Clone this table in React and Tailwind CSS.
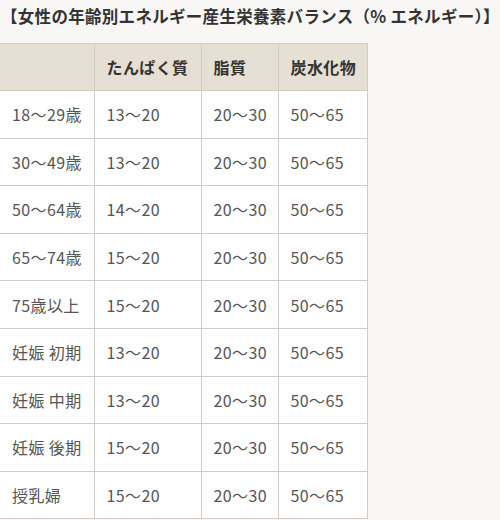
export default function App() {
  const rows = [
    ["18～29歳", "13～20", "20～30", "50～65"],
    ["30～49歳", "13～20", "20～30", "50～65"],
    ["50～64歳", "14～20", "20～30", "50～65"],
    ["65～74歳", "15～20", "20～30", "50～65"],
    ["75歳以上", "15～20", "20～30", "50～65"],
    ["妊娠 初期", "13～20", "20～30", "50～65"],
    ["妊娠 中期", "13～20", "20～30", "50～65"],
    ["妊娠 後期", "15～20", "20～30", "50～65"],
    ["授乳婦", "15～20", "20～30", "50～65"],
  ];

  return (
    <div className="min-h-[520px] w-[500px] overflow-hidden bg-[#f8f7f5] font-['Noto_Sans_CJK_JP',sans-serif]">
      <h3 className="h-[43px] pl-[1px] pt-[3px] text-[16.5px] leading-[26px] font-bold tracking-[0.3px] whitespace-nowrap text-[#333]">
        【女性の年齢別エネルギー産生栄養素バランス（% エネルギー）】
      </h3>
      <table className="w-[367px] table-fixed border-collapse text-[16px] tracking-[0.4px] text-[#555]">
        <colgroup>
          <col className="w-[94px]" />
          <col className="w-[107px]" />
          <col className="w-[77px]" />
          <col className="w-[89px]" />
        </colgroup>
        <thead>
          <tr className="bg-[#e6dfd4]">
            <th className="h-[47px] border-y border-r border-[#d0ccc6]"></th>
            <th className="border border-[#d0ccc6] pl-3 text-left font-bold whitespace-nowrap text-[#333]">
              たんぱく質
            </th>
            <th className="border border-[#d0ccc6] pl-3 text-left font-bold whitespace-nowrap text-[#333]">
              脂質
            </th>
            <th className="border border-[#d0ccc6] pl-3 text-left font-bold whitespace-nowrap text-[#333]">
              炭水化物
            </th>
          </tr>
        </thead>
        <tbody className="bg-white">
          {rows.map((r, i) => (
            <tr key={i}>
              {r.map((c, j) => (
                <td
                  key={j}
                  className={
                    j === 0
                      ? "h-[47.6px] border-y border-r border-[#d0ccc6] pl-3 whitespace-nowrap"
                      : "h-[47.6px] border border-[#d0ccc6] pl-3 whitespace-nowrap"
                  }
                >
                  {c}
                </td>
              ))}
            </tr>
          ))}
        </tbody>
      </table>
    </div>
  );
}
